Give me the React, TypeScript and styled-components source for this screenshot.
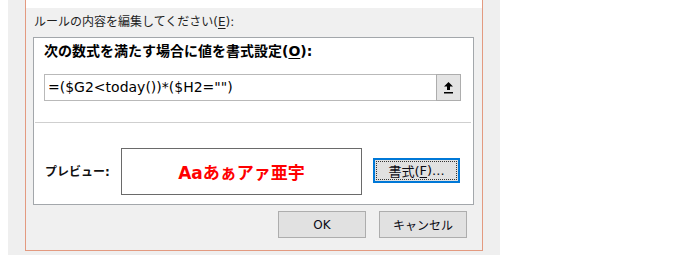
import React from "react";
import styled, { createGlobalStyle } from "styled-components";

const Global = createGlobalStyle`
  html, body { margin: 0; padding: 0; background: #ffffff; }
  body { width: 698px; height: 278px; overflow: hidden; font-family: "DejaVu Sans", "Noto Sans CJK JP", sans-serif; color: #000; }
`;

const Page = styled.div`
  padding-top: 8px;
  padding-left: 8px;
`;

const Shadow = styled.div`
  width: 492px;
  height: 255px;
  background: #efefef;
`;

const Dialog = styled.div`
  box-sizing: border-box;
  margin-top: -8px;
  margin-left: 17px;
  width: 458px;
  height: 251px;
  border: 1px solid #e39a80;
  border-top: none;
  background: linear-gradient(#ffffff 0 8px, #f0f0f0 8px);
  display: flex;
  flex-direction: column;
`;

const Label = styled.div`
  margin: 12px 0 0 8px;
  height: 20px;
  line-height: 20px;
  font-size: 12px;
  color: #1e1e1e;
  white-space: nowrap;
`;

const U = styled.span`
  text-decoration: underline;
  text-underline-offset: 2px;
`;

const Panel = styled.div`
  box-sizing: border-box;
  margin: 5px 0 0 7px;
  width: 441px;
  height: 168px;
  border: 1px solid #a3a7ab;
  background: #ffffff;
  display: flex;
  flex-direction: column;
  padding-top: 3px;
`;

const Heading = styled.div`
  margin-left: 10px;
  height: 20px;
  line-height: 20px;
  font-size: 14px;
  font-weight: 700;
  white-space: nowrap;
`;

const InputRow = styled.div`
  margin: 13px 0 0 10px;
  width: 417px;
  height: 27px;
  display: flex;
`;

const TextBox = styled.div`
  box-sizing: border-box;
  flex: 1;
  height: 27px;
  border: 1px solid #b9b9b9;
  border-right: none;
  padding-left: 3px;
  line-height: 25px;
  font-size: 14px;
  white-space: nowrap;
`;

const CollapseButton = styled.div`
  box-sizing: border-box;
  width: 25px;
  height: 27px;
  border: 1px solid #adadad;
  background: #e4e4e4;
  display: flex;
  align-items: center;
  justify-content: center;
`;

const Separator = styled.div`
  margin: 21px 2px 0 1px;
  height: 1px;
  background: #cfcfcf;
`;

const PreviewRow = styled.div`
  margin: 25px 0 0 11px;
  display: flex;
  align-items: center;
`;

const PreviewLabel = styled.div`
  width: 76px;
  font-size: 12px;
  font-weight: 700;
  line-height: 20px;
  color: #111;
  white-space: nowrap;
`;

const PreviewBox = styled.div`
  box-sizing: border-box;
  width: 241px;
  height: 47px;
  border: 1px solid #6a6a6a;
  background: #fff;
  display: flex;
  align-items: center;
  justify-content: center;
  color: #ff0000;
  font-size: 17px;
  font-weight: 700;
  white-space: nowrap;
`;

const Button = styled.div<{ $w: number; $focused?: boolean }>`
  box-sizing: border-box;
  width: ${(p) => p.$w}px;
  height: ${(p) => (p.$focused ? 25 : 27)}px;
  border: 1px solid ${(p) => (p.$focused ? "#0078d7" : "#adadad")};
  box-shadow: ${(p) => (p.$focused ? "inset 0 0 0 1px #0078d7" : "none")};
  outline: ${(p) => (p.$focused ? "1px dotted #333" : "none")};
  outline-offset: -4px;
  background: #e1e1e1;
  display: flex;
  align-items: center;
  justify-content: center;
  font-size: ${(p) => (p.$focused ? 13 : 12)}px;
  color: #0a0a14;
  white-space: nowrap;
`;

const FormatButton = styled(Button)`
  margin-left: 11px;
  margin-top: -3px;
`;

const Footer = styled.div`
  margin-top: 6px;
  padding-right: 15px;
  display: flex;
  justify-content: flex-end;
  gap: 13px;
`;

const UpIcon = () => (
  <svg width="11" height="13" viewBox="0 0 11 13">
    <path d="M5.5 1 L10 5.5 L7 5.5 L7 9 L4 9 L4 5.5 L1 5.5 Z" fill="#000" />
    <rect x="1" y="11" width="9" height="1.5" fill="#000" />
  </svg>
);

export default function App() {
  return (
    <>
      <Global />
      <Page>
        <Shadow>
          <Dialog>
            <Label>
              ルールの内容を編集してください(<U>E</U>):
            </Label>
            <Panel>
              <Heading>
                次の数式を満たす場合に値を書式設定(<U>O</U>):
              </Heading>
              <InputRow>
                <TextBox>=($G2&lt;today())*($H2="")</TextBox>
                <CollapseButton>
                  <UpIcon />
                </CollapseButton>
              </InputRow>
              <Separator />
              <PreviewRow>
                <PreviewLabel>プレビュー:</PreviewLabel>
                <PreviewBox>Aaあぁアァ亜宇</PreviewBox>
                <FormatButton $w={87} $focused>
                  書式(<U>F</U>)...
                </FormatButton>
              </PreviewRow>
            </Panel>
            <Footer>
              <Button $w={88}>OK</Button>
              <Button $w={88}>キャンセル</Button>
            </Footer>
          </Dialog>
        </Shadow>
      </Page>
    </>
  );
}
